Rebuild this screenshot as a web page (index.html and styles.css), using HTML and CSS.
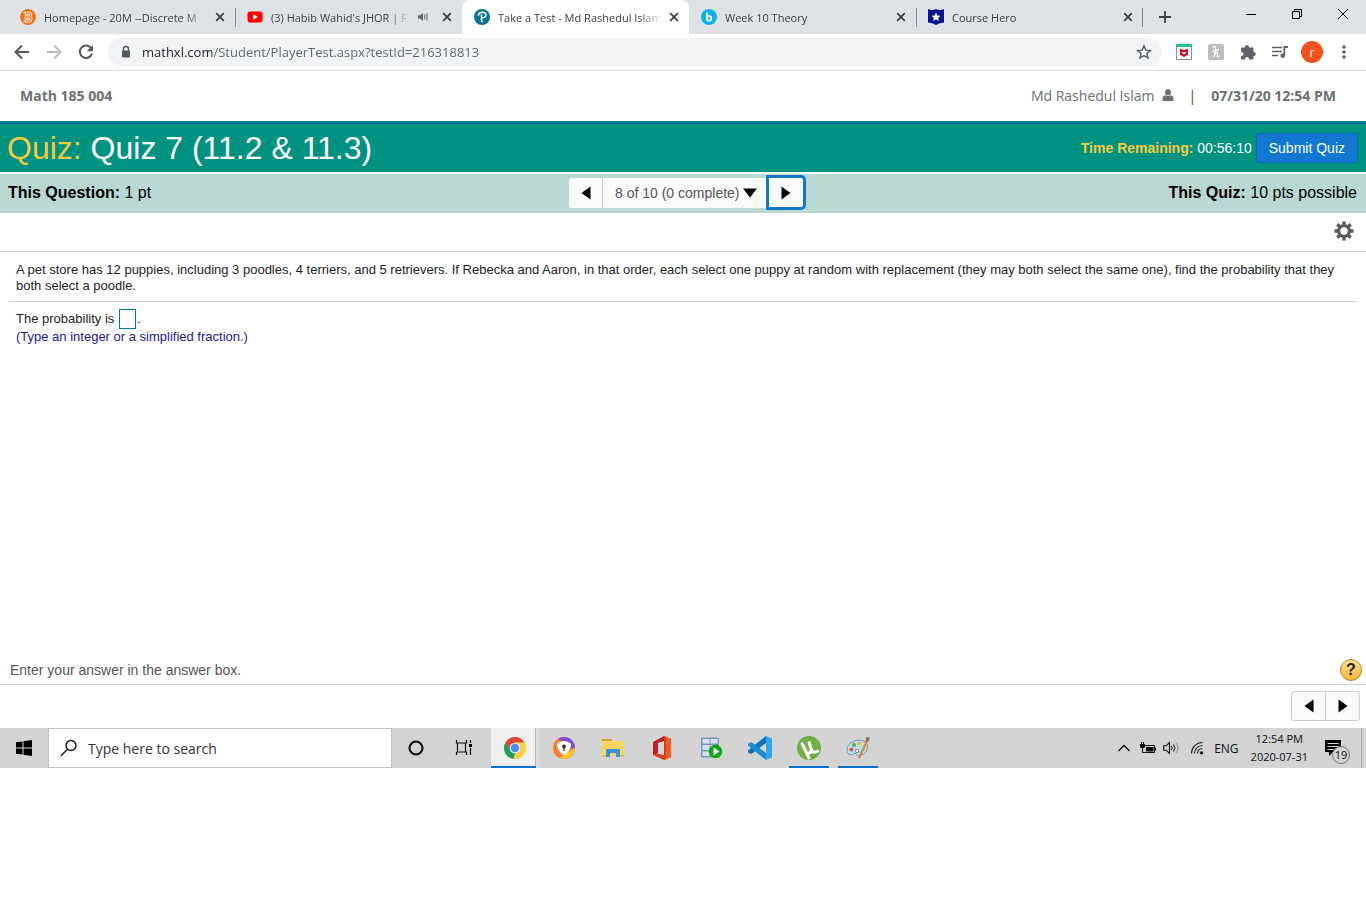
FILE: index.html
```html
<!DOCTYPE html>
<html lang="en">
<head>
<meta charset="utf-8">
<meta name="viewport" content="width=device-width, initial-scale=1">
<title>Take a Test - Md Rashedul Islam</title>
<link rel="stylesheet" href="styles.css">
</head>
<body>
<svg class="defs" width="0" height="0" aria-hidden="true">
  <symbol id="x" viewBox="0 0 10 10"><path d="M1.2 1.2l7.6 7.6M8.8 1.2L1.2 8.8" stroke="#3c4043" stroke-width="1.8"/></symbol>
  <symbol id="left" viewBox="0 0 10 14"><path d="M9.5 0.5v13L0.5 7z"/></symbol>
  <symbol id="right" viewBox="0 0 10 14"><path d="M0.5 0.5v13L9.500 7z"/></symbol>
</svg>

<header class="browser">
  <div class="tabstrip">
    <div class="tab">
      <svg class="favicon" viewBox="0 0 16 16"><circle cx="8" cy="8" r="8" fill="#e8761c"/><path d="M5.200 3h4q2.500 0 2.500 2.500 0 1.600-1 2.300 1.300.8 1.300 2.400Q12 13 9 13H5.200zM6.800 5h2q1 0 1 1t-1 1h-2zM6.800 9h2.200q1 0 1 1t-1 1H6.800zM3.500 3.500h1.700M3.500 12.500h1.700" fill="none" stroke="#fff" stroke-width=".9"/></svg>
      <span class="tab-title">Homepage - 20M --Discrete M</span>
      <button class="tab-close" aria-label="Close tab"><svg><use href="#x"/></svg></button>
    </div>
    <div class="tab divided">
      <svg class="favicon" viewBox="0 0 16 16"><rect x=".5" y="2.500" width="15" height="11" rx="2.500" fill="#f00"/><path d="M6.300 5.300v5.400L10.900 8z" fill="#fff"/></svg>
      <span class="tab-title">(3) Habib Wahid's JHOR | F</span>
      <svg class="audio" viewBox="0 0 10 10"><path d="M0 3.500h2L5 1v8L2 6.500H0z" fill="#5f6368"/><path d="M6.800 2.500v5M9 1.500v7" stroke="#5f6368"/></svg>
      <button class="tab-close" aria-label="Close tab"><svg><use href="#x"/></svg></button>
    </div>
    <div class="tab active">
      <svg class="favicon" viewBox="0 0 16 16"><circle cx="8" cy="8" r="8" fill="#0a7391"/><path d="M4.300 6.800C4.500 4.400 6.200 3.300 8.400 3.300c2.200 0 3.600 1 3.600 2.800S10.200 9 8 8.800M7.500 5.200v6.300q0 1.300 1.200 1.500" fill="none" stroke="#fff" stroke-width="1.500"/></svg>
      <span class="tab-title">Take a Test - Md Rashedul Islam</span>
      <button class="tab-close" aria-label="Close tab"><svg><use href="#x"/></svg></button>
    </div>
    <div class="tab">
      <svg class="favicon" viewBox="0 0 16 16"><circle cx="8" cy="8" r="8" fill="#0fb0ea"/><path d="M6 3.500v6.300" stroke="#fff" stroke-width="2"/><circle cx="8" cy="9.400" r="2.200" fill="none" stroke="#fff" stroke-width="1.800"/></svg>
      <span class="tab-title">Week 10 Theory</span>
      <button class="tab-close" aria-label="Close tab"><svg><use href="#x"/></svg></button>
    </div>
    <div class="tab divided last">
      <svg class="favicon" viewBox="0 0 16 16"><path d="M0 0q4 2 8 0 4 2 8 0v13.500q-4.500 0-8 2.500-3.500-2.500-8-2.500z" fill="#00168c"/><path d="M8 3.500l1.300 3 3.200.3-2.400 2.100.7 3.200L8 10.400l-2.800 1.700.7-3.200-2.400-2.100 3.200-.3z" fill="#fff"/></svg>
      <span class="tab-title">Course Hero</span>
      <button class="tab-close" aria-label="Close tab"><svg><use href="#x"/></svg></button>
    </div>
    <button class="new-tab" aria-label="New tab"><svg viewBox="0 0 12 12"><path d="M6 0v12M0 6h12" stroke="#3c4043" stroke-width="1.800"/></svg></button>
    <div class="window-controls">
      <button aria-label="Minimize"><svg viewBox="0 0 12 12"><path d="M1 6.500h10" stroke="#000"/></svg></button>
      <button aria-label="Restore"><svg viewBox="0 0 12 12"><path d="M1.500 3.500h7v7h-7zM3.500 3.500v-2h7v7h-2" fill="none" stroke="#000"/></svg></button>
      <button aria-label="Close"><svg viewBox="0 0 12 12"><path d="M1 1l10 10M11 1L1 11" stroke="#000"/></svg></button>
    </div>
  </div>

  <div class="toolbar">
    <button class="tool" aria-label="Back"><svg viewBox="0 0 24 24"><path d="M19 12H6M12 5.500L5.500 12l6.500 6.500" fill="none" stroke="#54575b" stroke-width="2"/></svg></button>
    <button class="tool" aria-label="Forward"><svg viewBox="0 0 24 24"><path d="M5 12h13M12 5.500l6.500 6.500-6.500 6.500" fill="none" stroke="#b9bbbe" stroke-width="2"/></svg></button>
    <button class="tool" aria-label="Reload"><svg viewBox="0 0 24 24"><path d="M17.200 8.200A6.200 6.200 0 1 0 18 13.500" fill="none" stroke="#54575b" stroke-width="2"/><path d="M19 5v6.300h-6.300z" fill="#54575b"/></svg></button>
    <div class="omnibox">
      <svg class="lock" viewBox="0 0 12 14"><path d="M3.500 6V4a2.500 2.500 0 0 1 5 0v2" fill="none" stroke="#54575b" stroke-width="1.400"/><rect x="2" y="5.500" width="8" height="7" rx="1" fill="#54575b"/></svg>
      <input class="url" type="text" aria-label="Address" value="mathxl.com/Student/PlayerTest.aspx?testId=216318813">
      <button class="star" aria-label="Bookmark this tab"><svg viewBox="0 0 16 16"><path d="M8 1.800l1.800 4.300 4.600.4-3.500 3 1.100 4.500L8 11.600 4 14l1.100-4.500-3.500-3 4.600-.4z" fill="none" stroke="#54575b" stroke-width="1.300"/></svg></button>
    </div>
    <button class="tool" aria-label="McAfee WebAdvisor"><svg viewBox="0 0 24 24"><rect x="4.500" y="5" width="15" height="14.500" fill="#fff" stroke="#8b8d90"/><path d="M4 4h16v3H4z" fill="#1fc283"/><path d="M8 8.500l4 1.800 4-1.800v6.200L12 17l-4-2.300z" fill="#c8102e"/><path d="M10.300 11.700L12 12.500l1.700-.8v1.800L12 14.500l-1.700-1z" fill="#fff"/></svg></button>
    <button class="tool" aria-label="Honey"><svg viewBox="0 0 24 24"><rect x="4" y="4" width="16" height="16" rx="2" fill="#bdbdbd"/><path d="M8.500 8.500q1.500-3 3-2c.8.800-.5 5-1.500 11 .8-4 2.300-5.500 3.200-4.800.9.700-.7 4.300.5 4.300q.9 0 1.800-1.500M8 11q4 .3 7-1.500" fill="none" stroke="#fff" stroke-width="1.200"/></svg></button>
    <button class="tool" aria-label="Extensions"><svg viewBox="0 0 24 24"><path d="M5 8.500q0-1 1-1h3V7a2 2 0 0 1 4 0v.5h3.500q1 0 1 1V12h.3a2 2 0 0 1 0 4h-.3v2.500q0 1-1 1H13V19a2 2 0 0 0-4 0v.5H6q-1 0-1-1V16h.5a2 2 0 0 0 0-4H5z" fill="#5f6368"/></svg></button>
    <button class="tool" aria-label="Media controls"><svg viewBox="0 0 24 24"><path d="M4 7.500h10M4 11.500h10M4 15.500h6" stroke="#5f6368" stroke-width="1.500"/><path d="M16.300 16V7H20" fill="none" stroke="#5f6368" stroke-width="1.800"/><circle cx="14.700" cy="15.800" r="2.300" fill="#5f6368"/></svg></button>
    <button class="tool profile" aria-label="Profile">r</button>
    <button class="tool" aria-label="Menu"><svg viewBox="0 0 24 24" fill="#54575b"><circle cx="12" cy="7" r="1.700"/><circle cx="12" cy="12" r="1.700"/><circle cx="12" cy="17" r="1.700"/></svg></button>
  </div>
</header>

<main class="player">
  <div class="course-bar">
    <strong>Math 185 004</strong>
    <div class="account">
      <span>Md Rashedul Islam</span>
      <svg class="user" viewBox="0 0 12 12" fill="#6a7070"><circle cx="6" cy="3.200" r="3"/><path d="M.5 12Q0 6.500 3.500 6.300q2.500 1.300 5 0Q12 6.500 11.500 12z"/></svg>
      <span class="bar">|</span>
      <strong>07/31/20 12:54 PM</strong>
    </div>
  </div>

  <div class="quiz-bar">
    <h1><span class="gold">Quiz:</span> Quiz 7 (11.2 &amp; 11.3)</h1>
    <div class="timer"><span><strong class="gold">Time Remaining:</strong> 00:56:10</span>
      <button class="submit">Submit Quiz</button></div>
  </div>

  <div class="question-bar">
    <div><strong>This Question:</strong> 1 pt</div>
    <div class="pager">
      <button class="prev" aria-label="Previous question"><svg><use href="#left"/></svg></button>
      <label class="jump">
        <select aria-label="Go to question"><option>8 of 10 (0 complete)</option></select>
        <svg viewBox="0 0 14 10"><path d="M0 .5h14L7 9.500z"/></svg>
      </label>
      <button class="next" aria-label="Next question"><svg><use href="#right"/></svg></button>
    </div>
    <div class="points"><strong>This Quiz:</strong> 10 pts possible</div>
  </div>

  <div class="settings-row">
    <button aria-label="Settings"><svg viewBox="0 0 20 20"><circle cx="10" cy="10" r="5.300" fill="none" stroke="#5a5a5a" stroke-width="3.200"/><path d="M10 .5v4M10 15.500v4M.5 10h4M15.500 10h4M3.300 3.300l2.800 2.800M13.900 13.900l2.800 2.800M3.300 16.700l2.800-2.800M13.900 6.100l2.800-2.800" stroke="#5a5a5a" stroke-width="3.400"/></svg></button>
  </div>

  <section class="exercise">
    <p class="question">A pet store has 12 puppies, including 3 poodles, 4 terriers, and 5 retrievers. If Rebecka and Aaron, in that order, each select one puppy at random with replacement (they may both select the same one), find the probability that they both select a poodle.</p>
    <div class="answer">
      <div class="answer-line">
        <label for="answer">The probability is</label>
        <input id="answer" type="text"><span>.</span>
      </div>
      <p class="hint">(Type an integer or a simplified fraction.)</p>
    </div>
  </section>

  <div class="instruction">
    <span>Enter your answer in the answer box.</span>
    <button class="help" aria-label="Help">?</button>
  </div>

  <div class="footer-nav">
    <button aria-label="Previous question"><svg><use href="#left"/></svg></button>
    <button aria-label="Next question"><svg><use href="#right"/></svg></button>
  </div>
</main>

<footer class="taskbar">
  <button class="start" aria-label="Start"><svg viewBox="0 0 16 16"><path d="M0 2.300L6.500 1.400V7.500H0zM7.500 1.200L16 0v7.500H7.500zM0 8.500h6.500v6.100L0 13.700zM7.500 8.500H16V16l-8.500-1.200z"/></svg></button>
  <label class="search">
    <svg viewBox="0 0 18 18"><circle cx="11" cy="6.500" r="5" fill="none" stroke="#111" stroke-width="1.400"/><path d="M7.500 10.200L1 16.700" stroke="#111" stroke-width="1.400"/></svg>
    <input type="text" placeholder="Type here to search" aria-label="Type here to search">
  </label>
  <button class="sys" aria-label="Cortana"><svg viewBox="0 0 24 24"><circle cx="12" cy="12" r="6.500" fill="none" stroke="#111" stroke-width="2.200"/></svg></button>
  <button class="sys" aria-label="Task view"><svg viewBox="0 0 24 24"><path d="M4.500 4v3h10V4M4.500 19v-3h10v3M5.500 7v9M13.500 7v9M18.500 4v3M18.500 12v7" fill="none" stroke="#111" stroke-width="1.200"/><path d="M17 8h3v3h-3z"/></svg></button>

  <nav class="apps" aria-label="Applications">
    <button class="app current" aria-label="Chrome"><svg viewBox="0 0 24 24"><circle cx="12" cy="12" r="11" fill="#ffcd46"/><path d="M2.500 6.500A11 11 0 0 1 21.500 6.500L12 7.500 7.500 14z" fill="#d9493a"/><path d="M2.500 6.500L7.700 14.500 12 17l-1.500 6A11 11 0 0 1 2.500 6.500z" fill="#1fa15d"/><path d="M21.500 6.500H12v1l4.300 7L10.800 23A11 11 0 0 0 21.500 6.500z" fill="#ffcd46"/><circle cx="12" cy="12" r="5.300" fill="#f1f1f1"/><circle cx="12" cy="12" r="4.200" fill="#4a8af4"/></svg></button>
    <button class="app" aria-label="Secure Browser"><svg viewBox="0 0 24 24"><circle cx="12" cy="12" r="11" fill="#fd7b2f"/><path d="M6 2.800A11 11 0 0 1 23 12q-3 2-6-1L12 6z" fill="#7a50d8"/><path d="M23 12a11 11 0 0 1-17 9q5 1 10-5z" fill="#f8ca2b"/><path d="M12 5q6 1 7 3 0 7-7 11.500Q5 15 5 8q1-2 7-3z" fill="#fff"/><circle cx="12" cy="10.300" r="1.900" fill="#333"/><path d="M11.300 10.500h1.400V15h-1.400z" fill="#333"/></svg></button>
    <button class="app" aria-label="File Explorer"><svg viewBox="0 0 24 24"><path d="M1 3h9l1.500 2.500H1z" fill="#d6a11e"/><path d="M1 5h22v15H1z" fill="#fdd565"/><path d="M5 13h14v8h-4v-4H9v4H5z" fill="#3a96d2"/><path d="M1 19h4v1.500H1zM19 19h4v1.500h-4z" fill="#e9ae38"/></svg></button>
    <button class="app" aria-label="Office"><svg viewBox="0 0 24 24"><path d="M14 0l7 2.500v19L14 24z" fill="#ef5a22"/><path d="M3 6L14 0v5L8 7v10l-5 2z" fill="#b8202e"/><path d="M3 19l4-1.500 7 1.500v5z" fill="#dc3d20"/><path d="M14 0l2 1v22l-2 1z" fill="#d63b1f"/></svg></button>
    <button class="app" aria-label="Database tool"><svg viewBox="0 0 24 24"><rect x="2" y="1.500" width="18" height="20" rx="1.500" fill="#7796b9"/><path d="M3.500 3h7v4.500h-7zM11.500 3h7v4.500h-7zM3.500 9h7v5h-7zM11.500 9h7v5h-7zM3.500 15.500h7V20h-7z" fill="#d3e1f3"/><circle cx="16.500" cy="15.500" r="6.800" fill="#10a513"/><path d="M14.500 11.500v8l6-4z" fill="#fff"/></svg></button>
    <button class="app" aria-label="Visual Studio Code"><svg viewBox="0 0 24 24"><path d="M18 0v7L3.500 18 0 16.500v-2z" fill="#1070b3"/><path d="M0 7.500L3.500 6 18 17v7L0 9.500z" fill="#1d8cd3"/><path d="M18 0l6 2.500v19L18 24z" fill="#31a5ee"/></svg></button>
    <button class="app running" aria-label="uTorrent"><svg viewBox="0 0 24 24"><circle cx="12" cy="12" r="12" fill="#72ad45"/><path d="M4.500 6.500q4 7.500 4.500 9.500 1.500 2 4 .7 2-1.200 1-4.200l-2.200-7M14.500 13q1 3.500 3.500 3.200 2-.2 3.500-1.800M8.200 14l4.300 9" fill="none" stroke="#fff" stroke-width="3"/></svg></button>
    <button class="app running" aria-label="Paint"><svg viewBox="0 0 24 24"><path d="M1 14Q1 7 10 4.500q10-1.500 11.500 5Q22 17 14 20q-3 1-3.500-1.500t-4 0Q1 19.500 1 14z" fill="#bedced" stroke="#6e98b1"/><circle cx="5.500" cy="13.500" r="2" fill="#dc4c36"/><circle cx="8" cy="9" r="2" fill="#54ae45"/><circle cx="13.500" cy="7.800" r="2" fill="#f3bb2e"/><circle cx="11" cy="15" r="1.700" fill="#fff" stroke="#568eb6"/><path d="M21 5l-8 17" stroke="#d58a45" stroke-width="2.500"/><path d="M20 6q-1-5 1-5l3 1q-1 4-4 4z" fill="#9e6947"/></svg></button>
  </nav>

  <div class="tray">
    <svg class="chevron" viewBox="0 0 14 14"><path d="M1.500 10L7 4.500l5.500 5.500" fill="none" stroke="#111" stroke-width="1.300"/></svg>
    <svg class="battery" viewBox="0 0 16 12"><path d="M4.500 3.500h10v7h-9" fill="none" stroke="#111"/><path d="M6 5h7.500v4.500H6zM15 5.500h1v3h-1z"/><path d="M0 2h5v2.500q0 1.500-1.500 1.500h-2Q0 6 0 4.500z"/><path d="M1.500 0v2M3.500 0v2M2.500 6v4.500h3" fill="none" stroke="#111"/></svg>
    <svg class="speaker" viewBox="0 0 16 14"><path d="M.7 4.800h2.500L6.500 1.500v11L3.200 9.200H.7z" fill="none" stroke="#111" stroke-width="1.100"/><path d="M8.500 5q1.500 2 0 4M10.500 3.500q3 3.500 0 7" fill="none" stroke="#111"/><path d="M12.800 2q4.500 5 0 10" fill="none" stroke="#888"/></svg>
    <svg class="wifi" viewBox="0 0 14 14"><path d="M1.500 12.500A11 11 0 0 1 12.500 1.500M4.500 12.500a8 8 0 0 1 8-8M7.500 12.500a5 5 0 0 1 5-5" fill="none" stroke="#222" stroke-width="1.100"/><circle cx="11.500" cy="11.800" r="1.600"/></svg>
    <span class="lang">ENG</span>
    <time class="clock" datetime="2020-07-31T12:54">12:54 PM<br>2020-07-31</time>
    <button class="notices" aria-label="19 notifications"><svg viewBox="0 0 18 18"><path d="M1 1h16v12H9l-4 4v-4H1z"/><path d="M3.500 4.500h11M3.500 7.500h11M3.500 10.500h8" stroke="#d2d2d2"/></svg><span>19</span></button>
  </div>
</footer>
</body>
</html>
```
FILE: styles.css
```css
* { box-sizing: border-box; }

body {
  margin: 0;
  background: #fff;
  color: #000;
  font-family: "Liberation Sans", Arial, sans-serif;
}

button, input, select { font: inherit; color: inherit; margin: 0; padding: 0; border: 0; background: none; }
button { display: flex; align-items: center; justify-content: center; cursor: pointer; }
button svg { display: block; }
p, h1 { margin: 0; }
svg { flex: none; }
.defs { position: absolute; }

/* Browser frame */
.browser { font-family: "Open Sans", "Noto Sans", sans-serif; border-bottom: 1px solid #d9dadc; }
.tabstrip { display: flex; height: 34px; padding-left: 8px; background: #dee1e6; }
.tab {
  display: flex;
  align-items: center;
  flex: 0 1 227px;
  min-width: 0;
  padding: 0 10px 0 12px;
  font-size: 11px;
  color: #3c4043;
}
.tab.active { background: #fff; border-radius: 8px 8px 0 0; }
.tab.divided, .tab.last {
  background: linear-gradient(#85888c, #85888c) 0 8px / 1px 19px no-repeat;
}
.tab.last {
  background-image: linear-gradient(#85888c, #85888c), linear-gradient(#85888c, #85888c);
  background-position: 0 8px, right 8px;
}
.favicon { width: 16px; height: 16px; margin-right: 8px; }
.tab-title {
  flex: 1;
  min-width: 0;
  overflow: hidden;
  white-space: nowrap;
  mask-image: linear-gradient(90deg, #000 calc(100% - 22px), transparent);
}
.audio { width: 10px; height: 10px; margin: 0 6px 0 8px; }
.tab-close { width: 10px; height: 16px; margin-left: 8px; }
.tab-close svg { width: 10px; height: 10px; }
.new-tab { width: 44px; }
.new-tab svg { width: 12px; height: 12px; }
.window-controls { display: flex; margin-left: auto; height: 28px; }
.window-controls button { width: 46px; }
.window-controls svg { width: 12px; height: 12px; }

.toolbar { display: flex; align-items: center; gap: 8px; height: 36px; padding: 0 10px; }
.tool { width: 24px; height: 24px; }
.tool svg { width: 24px; height: 24px; }
.profile { width: 22px; height: 22px; margin: 0 1px; border-radius: 50%; background: #f4511e; color: #fff; font-size: 12px; }
.omnibox {
  flex: 1;
  display: flex;
  align-items: center;
  height: 28px;
  margin: 0 2px;
  padding: 0 10px 0 12px;
  border-radius: 14px;
  background: #f1f3f4;
}
.lock { width: 12px; height: 14px; margin-right: 10px; }
.url {
  flex: 1;
  min-width: 0;
  font-size: 13px;
  color: #5f6368;
  background: linear-gradient(90deg, #202124 70px, #5f6368 70px);
  background-clip: text;
  -webkit-text-fill-color: transparent;
}
.star svg { width: 16px; height: 16px; }

/* Course header */
.course-bar {
  display: flex;
  justify-content: space-between;
  align-items: center;
  height: 50px;
  padding: 0 30px 2px 20px;
  font-family: "Open Sans", "Noto Sans", sans-serif;
  font-size: 14px;
  color: #6a7070;
}
.account { display: flex; align-items: center; }
.user { width: 12px; height: 12px; margin: 0 14px 0 8px; }
.bar { margin-right: 15px; color: #444; }

.quiz-bar {
  display: flex;
  justify-content: space-between;
  align-items: center;
  height: 51px;
  padding: 0 8px 1px 7px;
  border-top: 3px solid #047a91;
  background: #009280;
  color: #fff;
}
.quiz-bar h1 { font-size: 32px; font-weight: 400; line-height: 40px; }
.gold { color: #f2cb45; }
.timer { display: flex; align-items: center; gap: 4px; font-size: 14px; }
.submit {
  height: 30px;
  padding: 0 12px;
  border: 1px solid #0d68b9;
  border-radius: 3px;
  background: #1177d1;
}

.question-bar {
  display: grid;
  grid-template-columns: 1fr auto 1fr;
  align-items: center;
  height: 41px;
  padding: 0 9px 2px 8px;
  border-top: 2px solid #f4faf9;
  background: #bad8d3;
  font-size: 16px;
}
.points { text-align: right; }
.pager { display: flex; align-items: center; margin-left: 10px; }
.pager svg { width: 10px; height: 14px; }
.prev { width: 34px; height: 30px; background: #fafafa; border-right: 1px solid #ccc; border-radius: 3px 0 0 3px; }
.jump { display: flex; align-items: center; height: 30px; padding: 0 9px 0 12px; background: #fafafa; }
.jump select { appearance: none; font-size: 14px; color: #555; margin-right: 3px; }
.jump svg { width: 14px; height: 10px; }
.next { width: 40px; height: 35px; border: 3px solid #1577c2; border-radius: 0 5px 5px 0; background: #fafafa; }

/* Exercise */
.settings-row { display: flex; justify-content: flex-end; align-items: center; height: 39px; padding: 0 12px 2px 0; border-bottom: 1px solid #c9d0d2; }
.settings-row svg { width: 20px; height: 20px; }
.exercise { min-height: 404px; padding: 10px 10px 0; font-size: 13px; line-height: 16px; color: #222; }
.question { padding: 0 6px 7px; border-bottom: 1px solid #c9d0d2; }
.answer { padding: 7px 6px 0; }
.answer-line { display: flex; align-items: center; gap: 1px; }
.answer-line label { margin-right: 4px; }
.answer-line input { width: 17px; height: 20px; border: 1px solid #047a91; }
.hint { color: #1a1a8c; }
.instruction {
  display: flex;
  align-items: center;
  justify-content: space-between;
  height: 29px;
  padding: 0 4px 0 10px;
  border-bottom: 1px solid #c9d0d2;
  font-size: 14px;
  color: #555;
}
.help {
  width: 22px;
  height: 22px;
  border: 1px solid #b58a35;
  border-radius: 50%;
  background: linear-gradient(#ffe08a, #f3b63c);
  color: #222;
  font-size: 16px;
  font-weight: 700;
}
.footer-nav { display: flex; justify-content: flex-end; padding: 6px 6px 7px; }
.footer-nav button { width: 35px; height: 30px; border: 1px solid #ccc; border-radius: 3px 0 0 3px; background: #fafafa; }
.footer-nav button + button { border-left: 0; width: 34px; border-radius: 0 3px 3px 0; }
.footer-nav svg { width: 10px; height: 14px; }

/* Desktop taskbar */
.taskbar { display: flex; height: 40px; background: #d3d3d3; font-family: "Open Sans", "Noto Sans", sans-serif; color: #111; }
.start { width: 48px; }
.start svg { width: 16px; height: 16px; }
.search { display: flex; align-items: center; flex: 0 1 344px; padding-left: 11px; border: 1px solid #c4c4c4; background: #fff; }
.search svg { width: 18px; height: 18px; margin-right: 10px; }
.search input { flex: 1; min-width: 0; font-size: 14px; }
.search input::placeholder { color: #333; opacity: 1; }
.sys { width: 48px; }
.sys svg { width: 24px; height: 24px; }
.apps { display: flex; padding-left: 2px; }
.app { width: 49px; }
.app svg { width: 24px; height: 24px; }
.current {
  background: linear-gradient(#0a73c9, #0a73c9) 1px 100% / 45px 2px no-repeat, linear-gradient(90deg, #d3d3d3 1px, #efefef 1px 45px, #b4b4b4 45px 46px, #dedede 46px);
}
.running { background: linear-gradient(#0a73c9, #0a73c9) 50% 100% / 40px 2px no-repeat; }
.tray { display: flex; align-items: center; margin-left: auto; padding-right: 4px; font-size: 12px; }
.chevron { width: 14px; height: 14px; margin-right: 9px; }
.battery { width: 16px; height: 12px; margin-right: 7px; }
.speaker { width: 16px; height: 14px; margin-right: 11px; }
.wifi { width: 14px; height: 14px; margin-right: 10px; }
.lang { margin-right: 12px; }
.clock { font-size: 11px; line-height: 18px; text-align: center; }
.notices { position: relative; align-self: stretch; width: 54px; padding-right: 4px; border-right: 1px solid #aaa; }
.notices svg { width: 18px; height: 18px; }
.notices span {
  position: absolute;
  left: 24px;
  top: 18px;
  width: 18px;
  height: 18px;
  border: 1px solid #777;
  border-radius: 50%;
  background: #d3d3d3;
  font-size: 11px;
  line-height: 16px;
  text-align: center;
}
```
